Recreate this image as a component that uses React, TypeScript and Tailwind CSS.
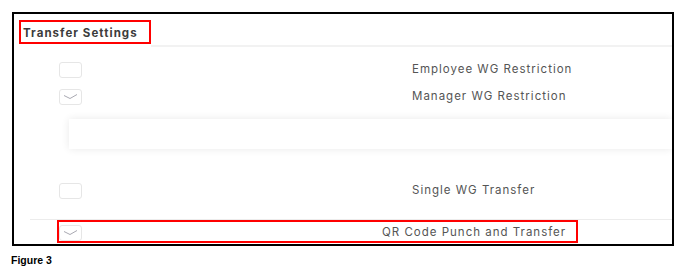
import React from "react";

function Check({ checked }: { checked?: boolean }) {
  return (
    <div className="w-[23px] h-[16px] shrink-0 rounded-[3px] border border-[#e6e6e6] bg-white">
      {checked && (
        <svg width="21" height="14" viewBox="0 0 21 14" className="block">
          <path d="M4 5.5 L10 8.5 L17 4.5" fill="none" stroke="#a9a9b2" strokeWidth="1" />
        </svg>
      )}
    </div>
  );
}

const label = "text-[11.5px] text-[#555] tracking-[1px] whitespace-nowrap";

export default function App() {
  return (
    <div
      className="w-[686px] h-[280px] bg-white pt-[12px] pl-[12px]"
      style={{ fontFamily: "Inter, 'Noto Sans', sans-serif" }}
    >
      <div className="w-[662px] h-[234px] border-2 border-black overflow-hidden flex flex-col">
        {/* header */}
        <div className="pt-[6px] pl-[5px]">
          <div className="w-[132px] h-[24px] border-2 border-[#ff0000] flex items-center pl-[2px] pt-[3px]">
            <span className="text-[11.5px] font-bold text-[#3c3c3c] tracking-[1.05px] whitespace-nowrap">Transfer Settings</span>
          </div>
        </div>
        <div className="ml-[137px] mt-[1px] h-[2px] bg-[#f2f2f2]" />

        {/* row 1 */}
        <div className="mt-[9px] h-[27px] flex items-center pl-[45px]">
          <Check />
          <span className={`ml-[330px] ${label}`}>Employee WG Restriction</span>
        </div>
        {/* row 2 */}
        <div className="h-[27px] flex items-center pl-[45px]">
          <Check checked />
          <span className={`ml-[330px] ${label}`}>Manager WG Restriction</span>
        </div>

        {/* card */}
        <div className="mt-[9px] ml-[55px] h-[30px] bg-white shadow-[0_0_8px_rgba(0,0,0,0.09)]" />

        {/* row 3 */}
        <div className="mt-[28px] h-[27px] flex items-center pl-[45px]">
          <Check />
          <span className={`ml-[330px] ${label}`}>Single WG Transfer</span>
        </div>

        <div className="mt-[15px] ml-[16px] h-[1px] bg-[#ececec]" />

        {/* row 4 */}
        <div className="ml-[43px] w-[521px] h-[23px] border-2 border-[#ff0000] flex items-center pt-[2px]">
          <Check checked />
          <span className={`ml-[300px] ${label}`}>QR Code Punch and Transfer</span>
        </div>
      </div>
      <div
        className="mt-[8px] -ml-[1px] text-[10.5px] font-bold text-black leading-[12px]"
        style={{ fontFamily: "'Liberation Sans', Arial, sans-serif" }}
      >
        Figure 3
      </div>
    </div>
  );
}
